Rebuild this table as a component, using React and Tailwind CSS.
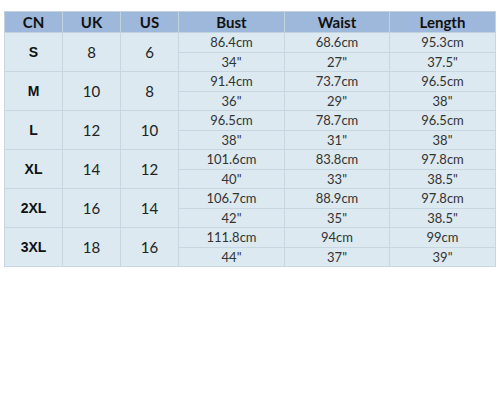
import { Fragment } from "react";

const rows = [
  { cn: "S", uk: "8", us: "6", cm: ["86.4cm", "68.6cm", "95.3cm"], inch: ['34"', '27"', '37.5"'] },
  { cn: "M", uk: "10", us: "8", cm: ["91.4cm", "73.7cm", "96.5cm"], inch: ['36"', '29"', '38"'] },
  { cn: "L", uk: "12", us: "10", cm: ["96.5cm", "78.7cm", "96.5cm"], inch: ['38"', '31"', '38"'] },
  { cn: "XL", uk: "14", us: "12", cm: ["101.6cm", "83.8cm", "97.8cm"], inch: ['40"', '33"', '38.5"'] },
  { cn: "2XL", uk: "16", us: "14", cm: ["106.7cm", "88.9cm", "97.8cm"], inch: ['42"', '35"', '38.5"'] },
  { cn: "3XL", uk: "18", us: "16", cm: ["111.8cm", "94cm", "99cm"], inch: ['44"', '37"', '39"'] },
];

const headers = ["CN", "UK", "US", "Bust", "Waist", "Length"];
const widths = ["w-[58px]", "w-[58px]", "w-[58px]", "w-[106px]", "w-[105px]", "w-[106px]"];

export default function App() {
  return (
    <div className="w-[500px] h-[400px] bg-white pt-[11px] pl-[4px]">
      <table
        className="border-collapse table-fixed text-[#222] bg-[#dce9f1]"
        style={{ fontFamily: "Lato, 'Open Sans', sans-serif" }}
      >
        <thead>
          <tr className="h-[21px] bg-[#9db8da]">
            {headers.map((h, i) => (
              <th
                key={h}
                className={`${widths[i]} border border-[#c3d2df] text-[15px] font-bold text-[#111] p-0 leading-none`}
              >
                {h}
              </th>
            ))}
          </tr>
        </thead>
        <tbody>
          {rows.map((r) => (
            <Fragment key={r.cn}>
              <tr className="h-[20px]">
                <td
                  rowSpan={2}
                  className="border border-[#c8d6e1] text-center text-[14px] font-bold p-0 text-[#111]"
                  style={{ fontFamily: "'Liberation Sans', Arial, sans-serif" }}
                >
                  {r.cn}
                </td>
                <td rowSpan={2} className="border border-[#c8d6e1] text-center text-[15px] p-0">
                  {r.uk}
                </td>
                <td rowSpan={2} className="border border-[#c8d6e1] text-center text-[15px] p-0">
                  {r.us}
                </td>
                {r.cm.map((v, i) => (
                  <td key={i} className="border border-[#c8d6e1] text-center text-[13px] p-0 leading-none text-[#333]">
                    {v}
                  </td>
                ))}
              </tr>
              <tr className="h-[19px]">
                {r.inch.map((v, i) => (
                  <td key={i} className="border border-[#c8d6e1] text-center text-[13px] p-0 leading-none text-[#333]">
                    {v}
                  </td>
                ))}
              </tr>
            </Fragment>
          ))}
        </tbody>
      </table>
    </div>
  );
}
